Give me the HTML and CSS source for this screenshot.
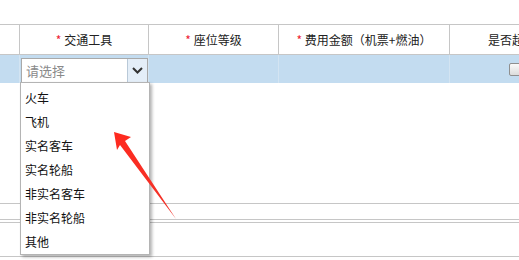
FILE: index.html
```html
<!DOCTYPE html>
<html lang="zh-CN">
<head>
    <meta charset="UTF-8">
    <title>交通工具</title>
    <link rel="stylesheet" href="styles.css">
</head>
<body>
    <div class="page">
        <table class="grid">
            <tr class="head">
                <th class="c0"></th>
                <th class="c1"><span class="req">*</span> 交通工具</th>
                <th class="c2"><span class="req">*</span> 座位等级</th>
                <th class="c3"><span class="req">*</span> 费用金额（机票+燃油）</th>
                <th class="c4">是否超标</th>
            </tr>
            <tr class="row">
                <td></td>
                <td>
                    <div class="select">
                        <span class="placeholder">请选择</span>
                        <span class="arrow">
                            <svg width="11" height="7" viewBox="0 0 11 7"><path d="M1 1 L5.5 5.5 L10 1" fill="none" stroke="#333" stroke-width="2"/></svg>
                        </span>
                    </div>
                </td>
                <td></td>
                <td></td>
                <td><span class="check"></span></td>
            </tr>
        </table>
        <div class="gap"></div>
        <div class="rule r1"></div>
        <div class="rule r2"></div>
        <div class="rule r3"></div>
        <div class="rule r4"></div>

        <ul class="menu">
            <li>火车</li>
            <li>飞机</li>
            <li>实名客车</li>
            <li>实名轮船</li>
            <li>非实名客车</li>
            <li>非实名轮船</li>
            <li>其他</li>
        </ul>

        <svg class="pointer" width="519" height="260" viewBox="0 0 519 260">
            <defs>
                <linearGradient id="red" x1="0" y1="0" x2="1" y2="1">
                    <stop offset="0" stop-color="#ff2a1f"/>
                    <stop offset="1" stop-color="#f0332a"/>
                </linearGradient>
            </defs>
            <polygon points="114,132 131,137 125,141 176,219 120,145 117,150" fill="url(#red)"/>
        </svg>
    </div>
</body>
</html>
```

FILE: styles.css
```css
body {
    margin: 0;
    background: #fff;
    font-family: "Noto Sans CJK SC", "Noto Sans", sans-serif;
    font-size: 12px;
    color: #222;
}
.page {
    position: relative;
    width: 519px;
    height: 260px;
    overflow: hidden;
    padding-top: 24px;
    box-sizing: border-box;
}
.grid {
    border-collapse: collapse;
    table-layout: fixed;
    width: 574px;
}
.grid th {
    height: 29px;
    padding: 0;
    font-weight: normal;
    font-size: 12px;
    color: #222;
    background: #fff;
    border-top: 1px solid #c6c6c6;
    border-bottom: 1px solid #c6c6c6;
    border-left: 1px solid #c6c6c6;
    text-align: center;
    white-space: nowrap;
}
.grid th.c0 {
    border-left: none;
}
.c0 { width: 19px; }
.c1 { width: 128px; }
.c2 { width: 129px; }
.c3 { width: 170px; }
.c4 { width: 124px; }
.req {
    color: #e23;
}
.row td {
    height: 28px;
    padding: 0;
    background: #c3dcf0;
    border-left: 1px solid #d3e4f2;
    vertical-align: bottom;
}
.row td:first-child {
    border-left: none;
}
.select {
    display: flex;
    height: 23px;
    margin-left: 1px;
    border: 1px solid #a9a9a9;
    background: #fff;
}
.placeholder {
    flex: 1;
    padding-left: 4px;
    line-height: 23px;
    font-size: 13px;
    color: #8a8a8a;
}
.arrow {
    width: 19px;
    display: flex;
    align-items: center;
    justify-content: center;
    border-left: 1px solid #b9c9d8;
    background: #e4eef8;
}
.check {
    display: block;
    width: 12px;
    height: 11px;
    margin: 0 0 7px 59px;
    border: 1px solid #8f8f8f;
    border-radius: 2px;
    background: linear-gradient(#fafafa, #dcdcdc);
}
.gap {
    height: 120px;
}
.rule {
    border-top: 1px solid #c6c6c6;
}
.r1 { margin-bottom: 15px; }
.r2 { margin-bottom: 2px; }
.r3 { margin-bottom: 33px; }
.menu {
    position: absolute;
    left: 20px;
    top: 82px;
    width: 128px;
    margin: 0;
    padding: 3px 0 0;
    list-style: none;
    background: #fff;
    border: 1px solid #b4b4b4;
    box-shadow: 2px 2px 3px rgba(0, 0, 0, 0.3);
}
.menu li {
    height: 24px;
    line-height: 24px;
    padding-left: 4px;
    font-size: 12px;
    color: #111;
}
.pointer {
    position: absolute;
    left: 0;
    top: 0;
}
```
